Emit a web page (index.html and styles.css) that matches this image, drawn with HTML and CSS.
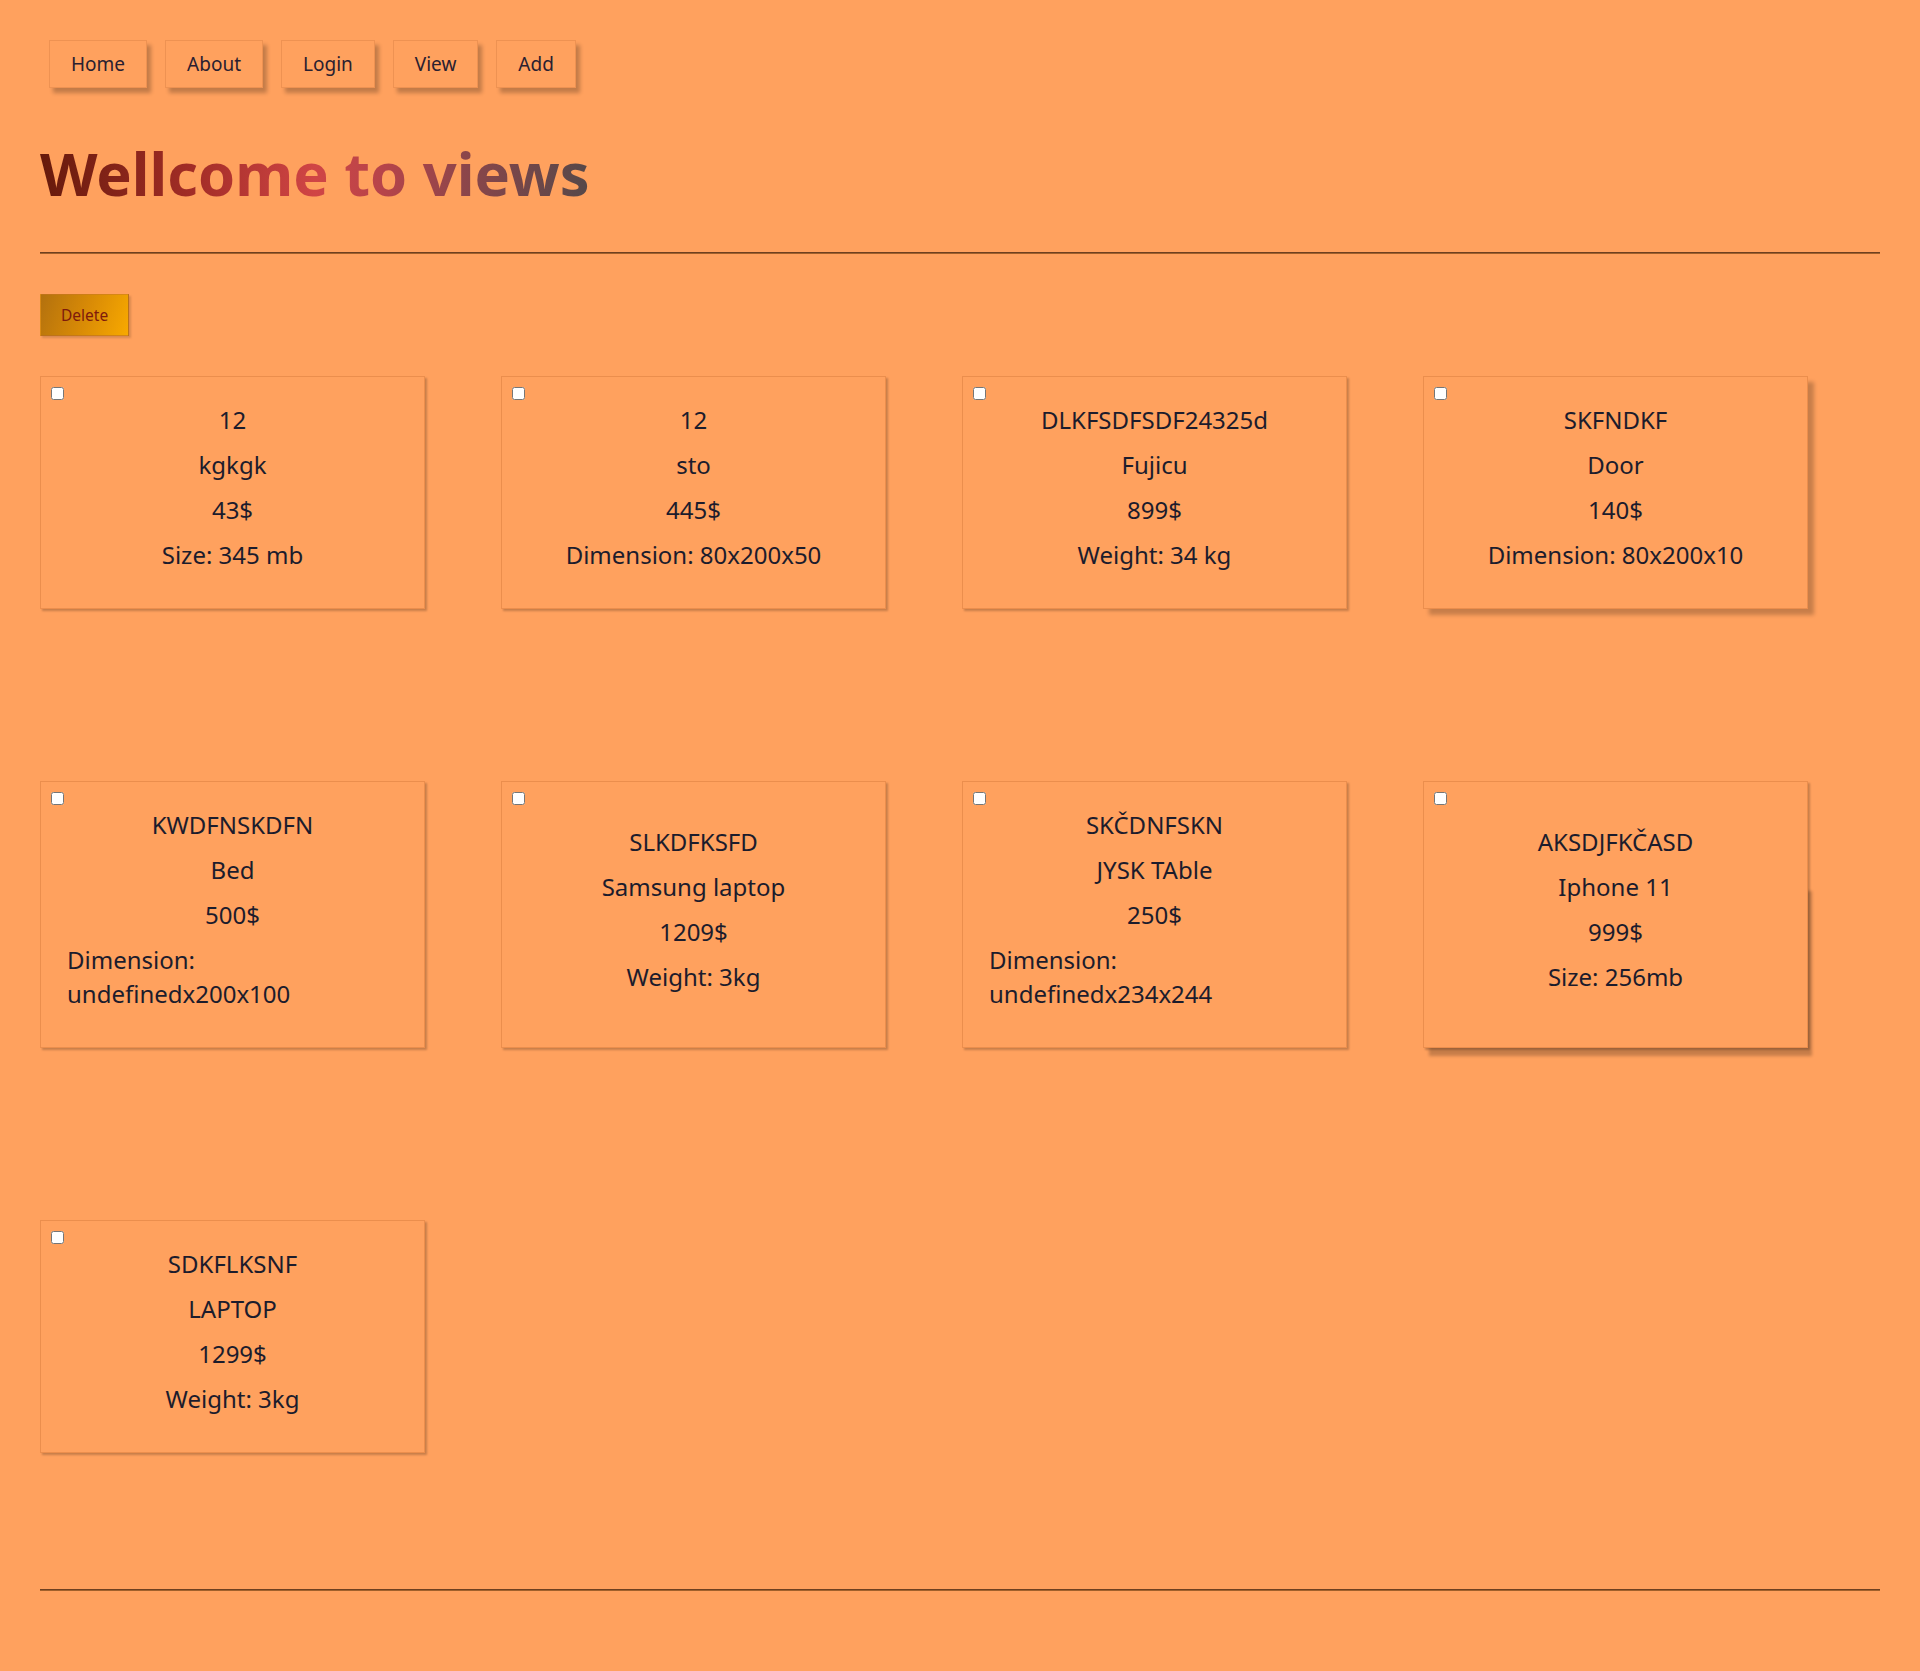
FILE: index.html
```html
<!DOCTYPE html>
<html lang="en">
<head>
<meta charset="utf-8">
<title>Views</title>
<link rel="stylesheet" href="styles.css">
</head>
<body>
<nav class="nav">
  <a class="nav-btn" href="#">Home</a>
  <a class="nav-btn" href="#">About</a>
  <a class="nav-btn" href="#">Login</a>
  <a class="nav-btn" href="#">View</a>
  <a class="nav-btn" href="#">Add</a>
</nav>
<h1 class="title">Wellcome to views</h1>
<hr class="rule">
<button class="delete-btn" type="button">Delete</button>
<div class="grid">
  <div class="card">
    <input class="check" type="checkbox">
    <div class="info"><p>12</p><p>kgkgk</p><p>43$</p><p>Size: 345 mb</p></div>
  </div>
  <div class="card">
    <input class="check" type="checkbox">
    <div class="info"><p>12</p><p>sto</p><p>445$</p><p>Dimension: 80x200x50</p></div>
  </div>
  <div class="card">
    <input class="check" type="checkbox">
    <div class="info"><p>DLKFSDFSDF24325d</p><p>Fujicu</p><p>899$</p><p>Weight: 34 kg</p></div>
  </div>
  <div class="card card-hover">
    <input class="check" type="checkbox">
    <div class="info"><p>SKFNDKF</p><p>Door</p><p>140$</p><p>Dimension: 80x200x10</p></div>
  </div>
  <div class="card">
    <input class="check" type="checkbox">
    <div class="info"><p>KWDFNSKDFN</p><p>Bed</p><p>500$</p><p>Dimension: undefinedx200x100</p></div>
  </div>
  <div class="card">
    <input class="check" type="checkbox">
    <div class="info"><p>SLKDFKSFD</p><p>Samsung laptop</p><p>1209$</p><p>Weight: 3kg</p></div>
  </div>
  <div class="card">
    <input class="check" type="checkbox">
    <div class="info"><p>SKČDNFSKN</p><p>JYSK TAble</p><p>250$</p><p>Dimension: undefinedx234x244</p></div>
  </div>
  <div class="card card-fading">
    <input class="check" type="checkbox">
    <div class="info"><p>AKSDJFKČASD</p><p>Iphone 11</p><p>999$</p><p>Size: 256mb</p></div>
  </div>
  <div class="card">
    <input class="check" type="checkbox">
    <div class="info"><p>SDKFLKSNF</p><p>LAPTOP</p><p>1299$</p><p>Weight: 3kg</p></div>
  </div>
</div>
<hr class="rule rule-bottom">
</body>
</html>
```

FILE: styles.css
```css
html {
  background: #ffa15e;
}

body {
  margin: 0;
  padding: 0 40px 78px;
  font-family: "Noto Sans", "Open Sans", sans-serif;
  color: #1c1c2c;
}

.nav {
  display: flex;
  gap: 18px;
  padding: 40px 0 0 9px;
}

.nav-btn {
  display: block;
  height: 46px;
  line-height: 46px;
  padding: 0 21px;
  font-size: 19px;
  color: #2a2030;
  text-decoration: none;
  background: #ffa15e;
  border: 1px solid rgba(160, 80, 30, 0.18);
  box-shadow: 4px 5px 4px rgba(0, 0, 0, 0.24);
}

.title {
  margin: 44px 0 0;
  font-size: 59.5px;
  line-height: 82px;
  font-weight: 700;
  display: inline-block;
  background: linear-gradient(90deg, #661a0b 0%, #a32d27 28%, #d04545 50%, #b7444a 62%, #85464a 80%, #554849 100%);
  -webkit-background-clip: text;
  background-clip: text;
  color: transparent;
}

.rule {
  margin: 38px 0 0;
  height: 0;
  border: none;
  border-top: 1px solid #6e4020;
  border-bottom: 1px solid #a0602c;
}

.delete-btn {
  display: block;
  margin: 40px 0 0;
  height: 42px;
  padding: 0 20px;
  font-family: "Noto Sans", "Open Sans", sans-serif;
  font-size: 15.5px;
  color: #7e1a0c;
  background: linear-gradient(110deg, #b3710e 0%, #d88a06 50%, #f8a900 100%);
  border: 1px solid rgba(190, 110, 40, 0.5);
  box-shadow: 2px 2px 2px rgba(0, 0, 0, 0.15);
  cursor: pointer;
}

.grid {
  display: grid;
  grid-template-columns: repeat(4, 385px);
  column-gap: 76px;
  row-gap: 172px;
  margin-top: 40px;
}

.card {
  position: relative;
  display: flex;
  flex-direction: column;
  padding: 7px 6px 25px;
  background: #ffa15e;
  border: 1px solid rgba(190, 100, 40, 0.3);
  box-shadow: 2px 2px 2px rgba(0, 0, 0, 0.22);
}

.card-hover {
  box-shadow: 6px 6px 4px rgba(0, 0, 0, 0.22);
}

.card-fading::before {
  content: "";
  position: absolute;
  top: 100px;
  left: 0;
  right: 0;
  bottom: 0;
  z-index: -1;
  box-shadow: 5px 9px 3px rgba(0, 0, 0, 0.22);
}

.check {
  align-self: flex-start;
  width: 13px;
  height: 13px;
  margin: 3px 3px 3px 4px;
}

.info {
  flex: 1;
  display: flex;
  flex-direction: column;
  justify-content: center;
  align-items: center;
  padding: 0 20px;
}

.info p {
  margin: 0 0 11px;
  font-size: 24px;
  line-height: 34px;
}

.rule-bottom {
  margin-top: 136px;
}
```
